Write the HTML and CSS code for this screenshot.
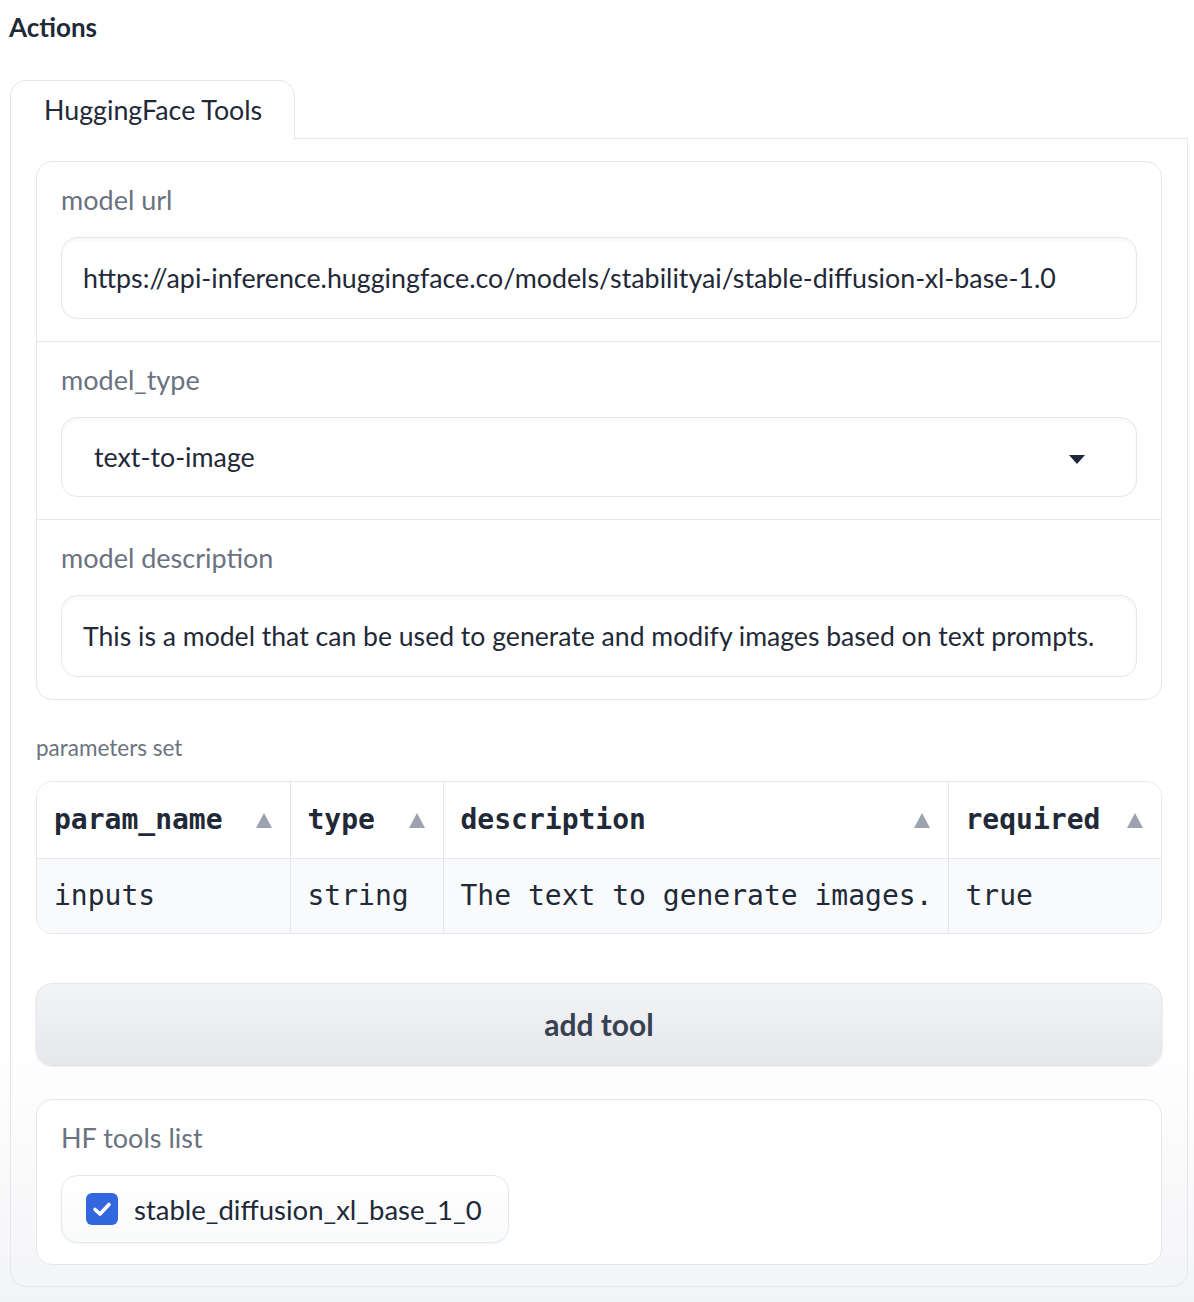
FILE: index.html
```html
<!DOCTYPE html>
<html lang="en">
<head>
<meta charset="utf-8">
<title>Actions</title>
<link rel="stylesheet" href="styles.css">
</head>
<body>
<div class="page">
  <h2 class="title">Actions</h2>
  <div class="tabs">
    <div class="tab-nav">
      <div class="tab active">HuggingFace Tools</div>
      <div class="tab-rest"></div>
    </div>
    <div class="tab-panel">
      <div class="group">
        <div class="field">
          <div class="label">model url</div>
          <div class="input">https://api-inference.huggingface.co/models/stabilityai/stable-diffusion-xl-base-1.0</div>
        </div>
        <div class="field">
          <div class="label">model_type</div>
          <div class="input select">
            <span class="select-value">text-to-image</span>
            <svg class="caret" width="16" height="9" viewBox="0 0 16 9"><path d="M0 0 H16 L8 9 Z" fill="#1f2937"/></svg>
          </div>
        </div>
        <div class="field">
          <div class="label">model description</div>
          <div class="input desc">This is a model that can be used to generate and modify images based on text prompts.</div>
        </div>
      </div>

      <div class="params">
        <div class="params-label">parameters set</div>
        <div class="table-wrap">
          <table class="table">
            <thead>
              <tr>
                <th class="c1"><div class="th"><span>param_name</span><span class="sort"></span></div></th>
                <th class="c2"><div class="th"><span>type</span><span class="sort"></span></div></th>
                <th class="c3"><div class="th"><span>description</span><span class="sort"></span></div></th>
                <th class="c4"><div class="th"><span>required</span><span class="sort"></span></div></th>
              </tr>
            </thead>
            <tbody>
              <tr>
                <td>inputs</td>
                <td>string</td>
                <td>The text to generate images.</td>
                <td>true</td>
              </tr>
            </tbody>
          </table>
        </div>
      </div>

      <button class="add-btn">add tool</button>

      <div class="block">
        <div class="label">HF tools list</div>
        <label class="check-pill">
          <span class="checkbox">
            <svg width="32" height="32" viewBox="0 0 32 32"><path d="M9 16.5 L14 21 L23 11.5" fill="none" stroke="#fff" stroke-width="3.6" stroke-linecap="round" stroke-linejoin="round"/></svg>
          </span>
          <span>stable_diffusion_xl_base_1_0</span>
        </label>
      </div>
    </div>
  </div>
</div>
</body>
</html>
```

FILE: styles.css
```css
* { box-sizing: border-box; }

html, body {
  margin: 0;
  padding: 0;
}

body {
  font-family: Lato, "Noto Sans", sans-serif;
  color: #1f2937;
  background: linear-gradient(#ffffff 0%, #ffffff 80%, #f3f4f6 100%);
  min-height: 1302px;
}

.page {
  padding: 0 6px 0 10px;
}

.title {
  margin: 0;
  margin-left: -1px;
  font-size: 26px;
  line-height: 54px;
  font-weight: 700;
  color: #1f2937;
  height: 80px;
}

.tab-nav {
  display: flex;
  height: 59px;
}

.tab {
  width: 285px;
  height: 59px;
  border: 1px solid #e5e7eb;
  border-bottom: none;
  border-radius: 16px 16px 0 0;
  background: #fff;
  font-size: 26.8px;
  line-height: 58px;
  padding-left: 33px;
  color: #1f2937;
}

.tab-rest {
  flex: 1;
  border-bottom: 1px solid #e5e7eb;
}

.tab-panel {
  border: 1px solid #e5e7eb;
  border-top: none;
  border-radius: 0 0 16px 16px;
  padding: 22px 25px 21px;
  display: flex;
  flex-direction: column;
}

.group {
  border: 1px solid #e5e7eb;
  border-radius: 16px;
  background: #fff;
}

.field {
  padding: 20px 24px 22px;
}

.field + .field {
  border-top: 1px solid #e5e7eb;
}

.label {
  font-size: 27px;
  line-height: 36px;
  color: #6b7280;
  margin-bottom: 19px;
}

.input {
  height: 82px;
  border: 1px solid #e5e7eb;
  border-radius: 16px;
  background: #fff;
  box-shadow: inset 0 2px 4px rgba(0, 0, 0, 0.04);
  font-size: 26.8px;
  line-height: 80px;
  padding: 0 21px;
  color: #1f2937;
  white-space: nowrap;
}

.desc {
  font-size: 26.6px;
}

.select {
  height: 80px;
  line-height: 78px;
  display: flex;
  align-items: center;
  justify-content: space-between;
  padding: 0 51px 0 32px;
}

.caret {
  display: block;
  margin-top: 4px;
}

.params {
  margin-top: 32px;
  padding-bottom: 17px;
}

.params-label {
  font-size: 22.5px;
  line-height: 32px;
  color: #6b7280;
  margin-bottom: 17px;
}

.table-wrap {
  border: 1px solid #e5e7eb;
  border-radius: 16px;
  overflow: hidden;
}

.table {
  width: 100%;
  border-collapse: collapse;
  table-layout: fixed;
  font-family: "DejaVu Sans Mono", "Liberation Mono", monospace;
  font-size: 28px;
  color: #1f2937;
}

.c1 { width: 253px; }
.c2 { width: 153px; }
.c3 { width: 505px; }
.c4 { width: auto; }

.table th,
.table td {
  height: 75px;
  padding: 0 18px 0 17px;
  text-align: left;
  white-space: nowrap;
  border-left: 1px solid #e5e7eb;
}

.table th:first-child,
.table td:first-child {
  border-left: none;
}

.table th {
  font-weight: 700;
  border-bottom: 1px solid #e5e7eb;
  background: #fff;
  height: 76px;
}

.table td {
  background: #f9fafb;
  font-weight: 400;
}

.th {
  display: flex;
  align-items: center;
  justify-content: space-between;
}

.sort {
  width: 0;
  height: 0;
  border-left: 8px solid transparent;
  border-right: 8px solid transparent;
  border-bottom: 15px solid #9ca3af;
  margin-top: 2px;
}

.add-btn {
  margin-top: 32px;
  height: 82px;
  width: 100%;
  border: 1px solid #e5e7eb;
  border-radius: 16px;
  background: linear-gradient(180deg, #f3f4f6 0%, #e5e7eb 100%);
  box-shadow: 0 1px 3px rgba(0, 0, 0, 0.1), 0 1px 2px rgba(0, 0, 0, 0.06);
  font-family: Lato, "Noto Sans", sans-serif;
  font-size: 30px;
  font-weight: 700;
  color: #374151;
  padding: 0;
}

.block {
  margin-top: 34px;
  border: 1px solid #e5e7eb;
  border-radius: 16px;
  background: #fff;
  padding: 20px 24px 21px;
}

.check-pill {
  display: inline-flex;
  align-items: center;
  gap: 16px;
  height: 68px;
  padding: 0 26px 0 24px;
  border: 1px solid #e5e7eb;
  border-radius: 16px;
  background: linear-gradient(180deg, #ffffff 0%, #f9fafb 100%);
  box-shadow: 0 1px 2px rgba(0, 0, 0, 0.05);
  font-size: 27.5px;
  color: #1f2937;
}

.checkbox {
  width: 32px;
  height: 32px;
  border-radius: 6px;
  background: #3367e0;
  display: block;
}

.checkbox svg {
  display: block;
}
```
